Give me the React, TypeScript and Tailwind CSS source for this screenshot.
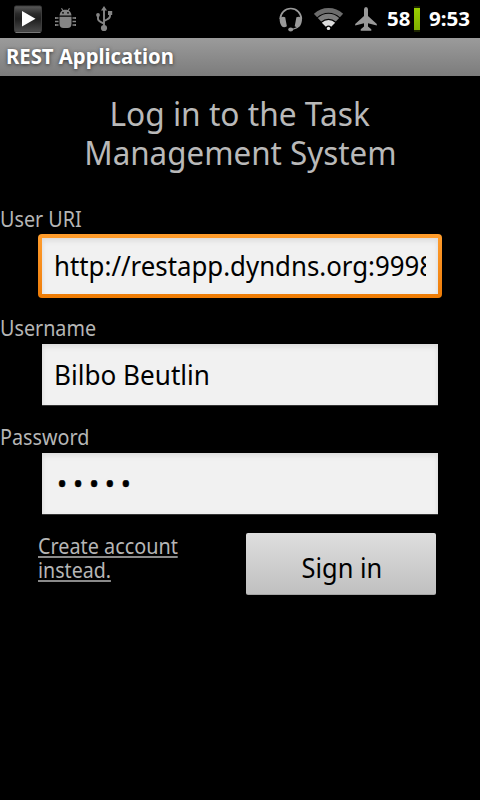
import type { ReactNode } from 'react';

function StatusBar() {
  return (
    <div className="flex h-[38px] items-center justify-between bg-black pl-[14px] pr-[9px]">
      <div className="flex items-center">
        <svg width="28" height="28" viewBox="0 0 28 28">
          <defs>
            <linearGradient id="tile" x1="0" y1="0" x2="0" y2="1">
              <stop offset="0" stopColor="#5b5b5b" />
              <stop offset="0.3" stopColor="#2a2a2a" />
              <stop offset="0.5" stopColor="#1e1e1e" />
              <stop offset="1" stopColor="#4c4c4c" />
            </linearGradient>
          </defs>
          <rect x="0.5" y="1" width="27" height="26" rx="1.500" fill="url(#tile)" stroke="#3c3c3c" />
          <path d="M1.500 27.500H26.500" stroke="#777" />
          <path d="M8 6V21.500L21.500 13.700Z" fill="#fff" />
        </svg>
        <svg className="ml-[13px]" width="21" height="26" viewBox="0 0 21 26" fill="#858585">
          <path d="M4.500 9.500C5 5.500 7 3.700 10.500 3.700S16 5.500 16.500 9.500Z" />
          <path d="M6.500 2.200L8 4.700M14.500 2.200L13 4.700" stroke="#858585" strokeWidth="1.200" />
          <circle cx="8" cy="6.800" r="0.900" fill="#000" />
          <circle cx="13" cy="6.800" r="0.900" fill="#000" />
          <path d="M4.500 10.700H16.500V17.500Q16.500 22 12.500 22H8.500Q4.500 22 4.500 17.500Z" />
          <path d="M3.500 12H0M3.500 15.500H0M3.500 19H0M17.500 12H21M17.500 15.500H21M17.500 19H21" stroke="#858585" strokeWidth="1.700" />
          <path d="M0.600 11.300V13M0.600 18V20M20.400 11.300V13M20.400 18V20" stroke="#858585" strokeWidth="1.200" />
        </svg>
        <svg className="ml-[20px]" width="17" height="26" viewBox="0 0 17 26" fill="#858585">
          <path d="M8 0L11 4.500H5Z" />
          <path d="M8 3V22M8 17.700L5 16.200Q2 14.800 2 12.800V9M8 15L11 13.500Q14 12 14 10V7" fill="none" stroke="#858585" strokeWidth="1.900" />
          <circle cx="2" cy="9" r="1.900" />
          <rect x="12" y="5" width="4.200" height="4" />
          <circle cx="8" cy="22" r="3.100" />
        </svg>
      </div>
      <div className="flex items-center">
        <svg width="25" height="26" viewBox="0 0 25 26" fill="#999">
          <path d="M1.300 13A10.500 10.500 0 1 1 22.300 13" fill="none" stroke="#999" strokeWidth="1.700" />
          <path d="M0.600 12.500Q2.500 10 6.200 11.200L7.900 20.200Q5.500 21.800 3.300 20.800Q0.500 18 0.600 12.500Z" />
          <path d="M23 12.500Q21.100 10 17.400 11.200L15.700 20.200Q18.100 21.800 20.300 20.800Q23.100 18 23 12.500Z" />
          <path d="M19.800 20C18.500 22.200 16.500 22.700 12.500 23.500" fill="none" stroke="#999" strokeWidth="1.200" />
          <ellipse cx="11.700" cy="23.600" rx="2.500" ry="2" />
        </svg>
        <svg className="ml-[10px]" width="30" height="26" viewBox="0 0 30 26" fill="none">
          <path d="M1.500 9.500A18.800 18.800 0 0 1 27.500 9.500" stroke="#6c6c6c" strokeWidth="4.700" />
          <path d="M5.500 13.800A13.100 13.100 0 0 1 23.500 13.800" stroke="#7c7c7c" strokeWidth="5" />
          <path d="M7.800 16.700A9.400 9.400 0 0 1 21.200 16.700L17.200 20.800A4 4 0 0 0 11.800 20.800Z" fill="#dcdcdc" />
          <circle cx="14.500" cy="22.400" r="1.700" fill="#e8e8e8" />
        </svg>
        <svg className="ml-[11px]" width="22" height="26" viewBox="0 0 22 26" fill="#999">
          <path d="M9 3.500Q9 1 11 1T13 3.500V10L21.800 18V19.500L13 17.200V20.500L16.300 23.300V24.800H5.700V23.300L9 20.500V17.200L0.200 19.500V18L9 10Z" />
        </svg>
        <span className="ml-[10px] w-[24px] text-[20px] font-bold leading-[26px] text-white"><Fit className="scale-x-[1.02]">58</Fit></span>
        <div className="ml-[3px] h-[26px] w-[6px] bg-[#1c2500] py-[2px]">
          <div className="h-[22px] bg-linear-to-b from-[#99d000] to-[#7fae00]" />
        </div>
        <span className="ml-[9px] w-[42px] text-[20px] font-bold leading-[26px] text-white"><Fit className="scale-x-[1.03]">9:53</Fit></span>
      </div>
    </div>
  );
}

function Fit({ children, className }: { children: ReactNode; className: string }) {
  return <span className={`inline-block origin-left whitespace-nowrap ${className}`}>{children}</span>;
}

function Label({ children }: { children: ReactNode }) {
  return (
    <label className="block h-[24px] text-[21px] leading-[24px] text-[#b6b6b6]">
      <Fit className="scale-x-[0.94]">{children}</Fit>
    </label>
  );
}

const field =
  'mx-[42px] h-[61px] bg-[#f1f1f1] px-[12px] pt-[15px] text-[27px] leading-[32px] text-black shadow-[inset_0_5px_6px_-3px_#d8d8d8,inset_4px_0_5px_-3px_#e2e2e2,inset_-4px_0_5px_-3px_#e2e2e2,0_1px_0_#343434]';

export default function App() {
  return (
    <div className="h-[800px] w-[480px] overflow-hidden bg-black font-['Noto_Sans','Open_Sans',sans-serif]">
      <StatusBar />
      <header className="h-[38px] bg-linear-to-b from-[#9b9b9b] to-[#7c7c7c] pl-[6px] pt-[5px] text-[21px] font-bold leading-[26px] text-white [text-shadow:0_1px_4px_#333]">
        <Fit className="scale-x-[0.966]">REST Application</Fit>
      </header>
      <h1 className="flex flex-col items-center pt-[18px] text-[33px] leading-[39px] text-[#b9b9b9]">
        <span className="inline-block scale-x-[0.96]">Log in to the Task</span>
        <span className="inline-block scale-x-[0.95]">Management System</span>
      </h1>
      <div className="pt-[35px]">
        <Label>User URI</Label>
        <div className="mx-[38px] mt-[3px] h-[64px] rounded-[4px] bg-linear-to-b from-[#ff9d2c] to-[#ee7c04] p-[4px]">
          <div className="h-[56px] bg-[#f1f1f1] px-[12px] pt-[12px] text-[27px] leading-[32px] text-black shadow-[inset_0_5px_6px_-3px_#d8d8d8,inset_4px_0_5px_-3px_#e2e2e2,inset_-4px_0_5px_-3px_#e2e2e2]">
            <div className="h-[40px] overflow-hidden"><Fit className="scale-x-[0.956]">http://restapp.dyndns.org:9998</Fit></div>
          </div>
        </div>
      </div>
      <div className="pt-[18px]">
        <Label>Username</Label>
        <div className={`${field} mt-[4px]`}><Fit className="scale-x-[0.967]">Bilbo Beutlin</Fit></div>
      </div>
      <div className="pt-[20px]">
        <Label>Password</Label>
        <div className={`${field} mt-[4px]`}><span className="pl-[3px] tracking-[5.8px] [-webkit-text-stroke:0.4px_#000]">•••••</span></div>
      </div>
      <div className="flex justify-between pl-[38px] pr-[44px] pt-[19px]">
        <a className="flex w-[160px] flex-col items-start pt-px text-[21px] leading-[24px] text-[#b6b6b6]">
          <Fit className="h-[24px] scale-x-[0.944] bg-[linear-gradient(#8a8a8a,#8a8a8a)] bg-[length:100%_2px] bg-[position:0_22px] bg-no-repeat">Create account</Fit>
          <Fit className="h-[24px] scale-x-[0.935] bg-[linear-gradient(#8a8a8a,#8a8a8a)] bg-[length:100%_2px] bg-[position:0_22px] bg-no-repeat">instead.</Fit>
        </a>
        <button className="h-[62px] w-[190px] rounded-[2px] border-b border-[#a5a5a5] bg-linear-to-b from-[#dedede] to-[#c0c0c0] pl-px pt-[8px] text-[27px] leading-[32px] text-black">
          <span className="inline-block scale-x-[0.94]">Sign in</span>
        </button>
      </div>
    </div>
  );
}
